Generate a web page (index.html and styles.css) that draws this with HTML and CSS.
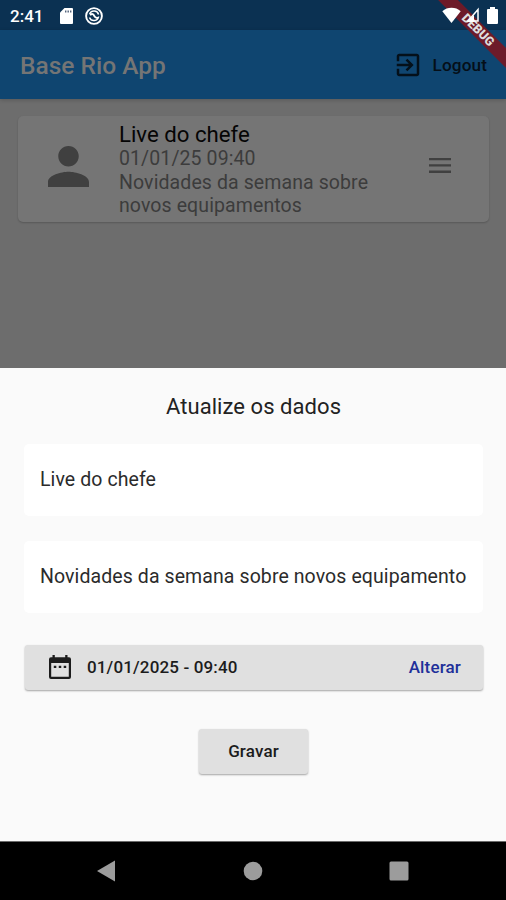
FILE: index.html
```
<!DOCTYPE html>
<html lang="pt-BR">
<head>
    <meta charset="UTF-8">
    <meta name="viewport" content="width=device-width, initial-scale=1.0">
    <title>Base Rio App</title>
    <link rel="stylesheet" href="styles.css">
</head>
<body>
    <div class="phone">
        <!-- Status bar -->
        <div class="status-bar">
            <span class="clock">2:41</span>
            <svg class="sd-icon" viewBox="0 0 13 16"><path d="M4.500 0H12q1 0 1 1v14q0 1-1 1H1q-1 0-1-1V4.500z" fill="#fff"/><path d="M5 2.500h1.400v2H5zM7.500 2.500h1.400v2H7.500zM10 2.500h1.400v2H10z" fill="#52627a"/></svg>
            <svg class="sync-icon" viewBox="0 0 18 18" fill="none" stroke="#fff"><circle cx="9" cy="9" r="7.900" stroke-width="1.900"/><path d="M4.600 7a4.800 4.800 0 0 1 9 .5M13.700 9.500a4.800 4.800 0 0 1-9.200 1" stroke-width="1.500"/><path d="M5 8q3-2 4 .5t4 2.500" stroke-width="2"/></svg>
            <div class="status-right">
                <svg class="wifi-icon" viewBox="0 0 19 16"><path d="M9.500 16L.3 4.200Q4.200.8 9.500.8t9.200 3.400z" fill="#fff"/></svg>
                <svg class="signal-icon" viewBox="0 0 14 16"><path d="M12 2.500V14H2z" fill="none" stroke="#fff" stroke-width="1.500"/><path d="M1 15L8 8v7z" fill="#fff"/></svg>
                <svg class="battery-icon" viewBox="0 0 11 17"><path d="M3 0h5v2h2q1 0 1 1v13q0 1-1 1H1q-1 0-1-1V3q0-1 1-1h2z" fill="#fff"/></svg>
            </div>
        </div>

        <!-- App bar -->
        <div class="app-bar">
            <h1 class="app-title">Base Rio App</h1>
            <button class="logout-btn">
                <svg viewBox="0 0 24 24"><path d="M10.090 15.590L11.500 17l5-5-5-5-1.410 1.410L12.670 11H3v2h9.670l-2.580 2.590zM19 3H5c-1.110 0-2 .9-2 2v4h2V5h14v14H5v-4H3v4c0 1.100.89 2 2 2h14c1.100 0 2-.9 2-2V5c0-1.100-.9-2-2-2z"/></svg>
                <span>Logout</span>
            </button>
        </div>

        <!-- List behind the sheet -->
        <div class="content">
            <div class="card">
                <svg class="person-icon" viewBox="4 4 16 16"><path d="M12 12c2.210 0 4-1.790 4-4s-1.790-4-4-4-4 1.790-4 4 1.790 4 4 4zm0 2c-2.670 0-8 1.340-8 4v2h16v-2c0-2.660-5.330-4-8-4z"/></svg>
                <div class="card-text">
                    <div class="card-title">Live do chefe</div>
                    <div class="card-sub">01/01/25 09:40</div>
                    <div class="card-sub">Novidades da semana sobre<br>novos equipamentos</div>
                </div>
                <svg class="menu-icon" viewBox="0 0 22 16"><path d="M0 0h22v2.300H0zM0 6.300h22v2.300H0zM0 12.600h22v2.300H0z"/></svg>
            </div>
        </div>

        <!-- Bottom sheet -->
        <div class="sheet">
            <h2 class="sheet-title">Atualize os dados</h2>
            <div class="field">Live do chefe</div>
            <div class="field">Novidades da semana sobre novos equipamento</div>
            <button class="date-row">
                <svg viewBox="0 0 22 24"><path d="M3.500 0h2.300v2.200h10.400V0h2.300v2.200H20q2 0 2 2V22q0 2-2 2H2q-2 0-2-2V4.200q0-2 2-2h1.500zM2.200 8v13.800h17.600V8zM4.800 10.800h2.500v2.300H4.800zM9.750 10.800h2.500v2.300h-2.500zM14.700 10.800h2.500v2.300h-2.500z" fill-rule="evenodd"/></svg>
                <span class="date-value">01/01/2025 - 09:40</span>
                <span class="date-change">Alterar</span>
            </button>
            <button class="save-btn">Gravar</button>
        </div>

        <!-- Android navigation -->
        <div class="nav-bar">
            <svg viewBox="0 0 22 22"><path d="M2 11L20 .500v21z"/></svg>
            <svg viewBox="0 0 22 22"><circle cx="11" cy="11" r="9.300"/></svg>
            <svg viewBox="0 0 22 22"><rect x="1.500" y="1.500" width="19" height="19" rx="1.500"/></svg>
        </div>

        <div class="debug-corner"><span class="debug-banner">DEBUG</span></div>
    </div>
</body>
</html>
```
FILE: styles.css
```
body {
    margin: 0;
    font-family: Roboto, 'Liberation Sans', sans-serif;
}

h1,
h2 {
    margin: 0;
}

svg {
    display: block;
    flex: none;
}

button {
    border: none;
    padding: 0;
    font-family: inherit;
    cursor: pointer;
}

.phone {
    position: relative;
    display: flex;
    flex-direction: column;
    width: 506px;
    height: 900px;
    overflow: hidden;
    background: #6d6d6d;
}

.status-bar {
    display: flex;
    align-items: center;
    height: 30px;
    box-sizing: border-box;
    padding: 2px 8px 0 10px;
    background: #0b3152;
    color: #fff;
}

.clock {
    width: 50px;
    font-size: 17px;
    font-weight: 500;
}

.sd-icon {
    width: 13px;
    height: 16px;
}

.sync-icon {
    width: 18px;
    height: 18px;
    margin-left: 12px;
}

/* system icons stay above the ribbon */
.status-right {
    position: relative;
    z-index: 2;
    display: flex;
    align-items: center;
    margin: -1px 0 0 auto;
}

.wifi-icon {
    width: 19px;
    height: 16px;
}

.signal-icon {
    width: 14px;
    height: 16px;
    margin: 0 7px 0 5px;
}

.battery-icon {
    width: 11px;
    height: 17px;
}

.app-bar {
    display: flex;
    align-items: center;
    justify-content: space-between;
    height: 69px;
    box-sizing: border-box;
    padding: 2px 19px 0 20px;
    background: #0f4570;
    box-shadow: 0 1px 4px rgba(0, 0, 0, 0.2);
}

.app-title {
    font-size: 24.5px;
    font-weight: 500;
    color: #757575;
}

.logout-btn {
    display: flex;
    align-items: center;
    gap: 10px;
    background: none;
    color: #050f18;
    font-size: 17.2px;
    font-weight: 500;
    letter-spacing: 0.1px;
}

.logout-btn svg {
    width: 30px;
    height: 30px;
    fill: #04101a;
}

.content {
    height: 269px;
    box-sizing: border-box;
    padding: 17px 17px 0 18px;
}

.card {
    display: flex;
    align-items: center;
    height: 106px;
    box-sizing: border-box;
    padding: 0 38px 0 30px;
    border-radius: 5px;
    background: #757575;
    box-shadow: 0 1px 2px rgba(0, 0, 0, 0.2);
}

.person-icon {
    width: 41px;
    height: 41px;
    fill: #404040;
    margin-top: -5px;
}

.card-text {
    margin: 1px 0 0 30px;
}

.card-title {
    font-size: 22.2px;
    line-height: 26px;
    color: #050505;
}

.card-sub {
    font-size: 19.5px;
    line-height: 23.3px;
    letter-spacing: 0.1px;
    color: #3c3c3c;
}

.menu-icon {
    width: 22px;
    height: 16px;
    margin: -5px 0 0 auto;
    fill: #404040;
}

.sheet {
    display: flex;
    flex-direction: column;
    height: 474px;
    box-sizing: border-box;
    padding: 25px 23px 0 24px;
    background: #fafafa;
}

.sheet-title {
    margin-bottom: 23px;
    font-size: 22px;
    font-weight: 400;
    line-height: 28px;
    letter-spacing: 0.06px;
    text-align: center;
    color: #222;
}

.field {
    height: 72px;
    margin-bottom: 25px;
    padding-left: 16px;
    border-radius: 5px;
    background: #fff;
    color: #2b2b2b;
    font-size: 19.5px;
    line-height: 71px;
    letter-spacing: 0.09px;
    white-space: nowrap;
}

.date-row,
.save-btn {
    background: #e0e0e0;
    border-radius: 3px;
    box-shadow: 0 1px 2px rgba(0, 0, 0, 0.35);
    color: #1c1c1c;
    font-size: 17px;
    font-weight: 500;
    letter-spacing: 0.15px;
}

.date-row {
    display: flex;
    align-items: center;
    height: 45px;
    margin: 7px 0 0 1px;
    padding: 0 22px 0 24px;
}

.date-row svg {
    width: 22px;
    height: 24px;
    fill: #1c1c1c;
}

.date-value {
    margin-left: 16px;
}

.date-change {
    margin-left: auto;
    color: #1f309a;
}

.save-btn {
    align-self: center;
    width: 109px;
    height: 45px;
    margin-top: 39px;
}

.nav-bar {
    display: flex;
    align-items: center;
    justify-content: space-between;
    height: 59px;
    box-sizing: border-box;
    padding: 0 96px 0 95px;
    border-top: 1px solid #6b6b6b;
    background: #000;
}

.nav-bar svg {
    width: 22px;
    height: 22px;
    fill: #9c9c9c;
}

/* ribbon clipped to the top right corner */
.debug-corner {
    position: absolute;
    top: 0;
    right: 0;
    width: 80px;
    height: 80px;
    overflow: hidden;
}

.debug-banner {
    position: absolute;
    top: 23px;
    right: -42px;
    width: 140px;
    height: 14px;
    transform: rotate(45deg);
    background: rgba(115, 25, 38, 0.95);
    color: #ddd;
    font-size: 12.5px;
    font-weight: 900;
    line-height: 14px;
    text-align: center;
}
```
